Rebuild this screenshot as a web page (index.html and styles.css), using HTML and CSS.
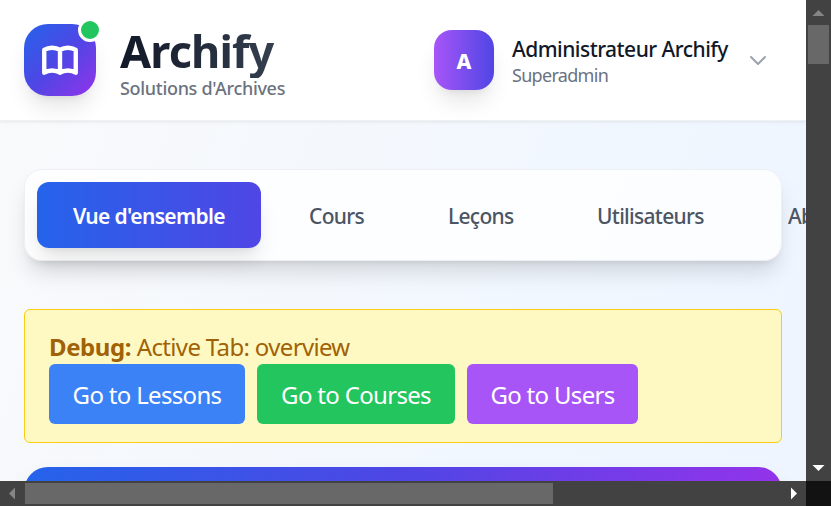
FILE: index.html
```html
<!DOCTYPE html>
<html lang="fr">
<head>
<meta charset="utf-8">
<title>Archify</title>
<link rel="stylesheet" href="styles.css">
</head>
<body>
<div class="window">
  <div class="viewport">
    <header class="header">
      <div class="brand">
        <div class="logo">
          <svg class="book" viewBox="0 0 24 24"><path d="M12 6.253v13m0-13C10.832 5.477 9.246 5 7.5 5S4.168 5.477 3 6.253v13C4.168 18.477 5.754 18 7.5 18s3.332.477 4.5 1.253m0-13C13.168 5.477 14.754 5 16.5 5c1.747 0 3.332.477 4.5 1.253v13C19.832 18.477 18.247 18 16.5 18c-1.746 0-3.332.477-4.5 1.253"/></svg>
          <span class="status"></span>
        </div>
        <div class="brand-text">
          <h1 class="brand-name">Archify</h1>
          <p class="tagline">Solutions d'Archives</p>
        </div>
      </div>
      <div class="user">
        <div class="avatar">A</div>
        <div class="user-text">
          <p class="user-name">Administrateur Archify</p>
          <p class="user-role">Superadmin</p>
        </div>
        <svg class="chevron" viewBox="0 0 24 24"><path d="M19 9l-7 7-7-7"/></svg>
      </div>
    </header>
    <main class="main">
      <nav class="tabs">
        <a class="tab tab-active">Vue d'ensemble</a>
        <a class="tab tab-courses">Cours</a>
        <a class="tab tab-lessons">Leçons</a>
        <a class="tab tab-users">Utilisateurs</a>
        <a class="tab tab-subs">Abonnements</a>
      </nav>
      <section class="debug">
        <p class="debug-line"><strong class="debug-key">Debug:</strong> <span>Active Tab: overview</span></p>
        <div class="debug-actions">
          <button class="btn btn-blue">Go to Lessons</button>
          <button class="btn btn-green">Go to Courses</button>
          <button class="btn btn-purple">Go to Users</button>
        </div>
      </section>
      <section class="hero"></section>
    </main>
  </div>
  <div class="scroll-y">
    <svg class="arrow" viewBox="0 0 25 25"><path class="arrow-off" d="M6.500 16h12L12.500 10z"/></svg>
    <div class="thumb-y"></div>
    <svg class="arrow arrow-down" viewBox="0 0 25 25"><path class="arrow-on" d="M6.500 9h12L12.500 15z"/></svg>
  </div>
  <div class="scroll-x">
    <svg class="arrow" viewBox="0 0 25 25"><path class="arrow-off" d="M15 6.500v12L9 12.500z"/></svg>
    <div class="thumb-x"></div>
    <svg class="arrow arrow-right" viewBox="0 0 25 25"><path class="arrow-on" d="M10 6.500v12L16 12.500z"/></svg>
  </div>
  <div class="corner"></div>
</div>
</body>
</html>
```
FILE: styles.css
```css
* { box-sizing: border-box; }
body, h1, p { margin: 0; }
body {
  overflow: hidden;
  font-family: "Noto Sans", "Open Sans", sans-serif;
  white-space: nowrap;
}
.window {
  display: grid;
  grid-template: 481px 25px / 806px 25px;
  width: 831px;
  height: 506px;
}
.viewport {
  overflow: hidden;
  background: linear-gradient(to bottom right, #f9fafb, #eff6ff 50%, #eef2ff) 0 0 / 806px 2200px no-repeat;
}
.header {
  display: flex;
  justify-content: space-between;
  height: 121px;
  padding: 24px 36px 0 24px;
  background: #fff;
  border-bottom: 1px solid #f0f1f3;
  box-shadow: 0 1px 3px rgba(0,0,0,.08);
}
.brand { display: flex; gap: 24px; }
.logo {
  position: relative;
  display: grid;
  place-items: center;
  width: 72px;
  height: 72px;
  border-radius: 24px;
  background: linear-gradient(to bottom right, #2563eb, #4f46e5 50%, #9333ea);
  box-shadow: 0 15px 22px -4px rgba(0,0,0,.1), 0 6px 9px -6px rgba(0,0,0,.1);
}
.book { width: 42px; height: 42px; fill: none; stroke: #fff; stroke-width: 2.5; stroke-linecap: round; stroke-linejoin: round; }
.status {
  position: absolute;
  top: -6px;
  right: -6px;
  width: 24px;
  height: 24px;
  border: 3px solid #fff;
  border-radius: 50%;
  background: #22c55e;
}
.brand-name {
  height: 54px;
  font-size: 45px;
  line-height: 54px;
  font-weight: 700;
  letter-spacing: -.85px;
  color: transparent;
  background: linear-gradient(to right, #111827, #374151);
  background-clip: text;
  -webkit-background-clip: text;
}
.tagline { font-size: 18px; line-height: 20px; font-weight: 500; letter-spacing: -.31px; color: #6b7280; }
.user { display: flex; align-items: flex-start; padding-top: 6px; }
.avatar {
  width: 60px;
  height: 60px;
  border-radius: 18px;
  background: linear-gradient(to right, #a855f7, #4f46e5);
  box-shadow: 0 15px 22px -4px rgba(0,0,0,.1), 0 6px 9px -6px rgba(0,0,0,.1);
  color: #fff;
  font-size: 21px;
  line-height: 62px;
  font-weight: 800;
  text-align: center;
}
.user-text { width: 216px; margin-left: 18px; padding-top: 6px; }
.user-name { font-size: 21px; line-height: 27px; font-weight: 500; letter-spacing: -.53px; color: #111827; }
.user-role { font-size: 18px; line-height: 25px; letter-spacing: -.7px; color: #6b7280; }
.chevron { width: 24px; height: 24px; margin: 18px 0 0 18px; fill: none; stroke: #9ca3af; stroke-width: 2; stroke-linecap: round; stroke-linejoin: round; }
.main { display: flex; flex-direction: column; padding: 48px 24px 0; }
.tabs {
  display: flex;
  gap: 12px;
  height: 92px;
  padding: 12px;
  border: 1px solid #eef0f4;
  border-radius: 18px;
  background: rgba(255,255,255,.8);
  box-shadow: 0 15px 22px -4px rgba(0,0,0,.13), 0 6px 9px -6px rgba(0,0,0,.13);
}
.tab {
  flex: none;
  height: 66px;
  padding: 0 36px;
  border-radius: 12px;
  font-size: 21px;
  line-height: 69px;
  font-weight: 500;
  letter-spacing: -.7px;
  color: #4b5563;
}
.tab-active {
  width: 224px;
  background: linear-gradient(to right, #2563eb, #4f46e5);
  box-shadow: 0 15px 22px -4px rgba(0,0,0,.1), 0 6px 9px -6px rgba(0,0,0,.1);
  color: #fff;
  font-weight: 600;
  letter-spacing: -.67px;
}
.tab-courses { width: 127px; }
.tab-lessons { width: 137px; }
.tab-users { width: 179px; }
.debug {
  height: 134px;
  margin-top: 48px;
  padding: 19px 24px 0;
  border: 1px solid #facc15;
  border-radius: 6px;
  background: #fef9c3;
  color: #a16207;
  font-size: 24px;
  letter-spacing: -.66px;
}
.debug-key { letter-spacing: -.4px; }
.debug-line { height: 35px; line-height: 36px; }
.debug-actions { display: flex; gap: 12px; }
.btn {
  height: 60px;
  padding: 1px 0 0;
  border: 0;
  border-radius: 6px;
  font: inherit;
  letter-spacing: -.68px;
  color: #fff;
}
.btn-blue { width: 196px; background: #3b82f6; }
.btn-green { width: 198px; background: #22c55e; }
.btn-purple { width: 171px; background: #a855f7; }
.hero {
  height: 200px;
  margin-top: 24px;
  border-radius: 24px;
  background: linear-gradient(to right, #2563eb, #4f46e5 50%, #9333ea);
  box-shadow: 0 20px 36px -6px rgba(0,0,0,.16);
}
.scroll-y, .scroll-x { display: flex; background: #424242; }
.scroll-y { flex-direction: column; }
.arrow { flex: none; width: 25px; height: 25px; }
.arrow-off { fill: #858585; }
.arrow-on { fill: #fff; }
.thumb-y { width: 21px; height: 39px; margin-left: 2px; background: #686868; }
.arrow-down { margin-top: auto; }
.thumb-x { width: 528px; height: 21px; margin-top: 2px; background: #686868; }
.arrow-right { margin-left: auto; }
.corner { background: #121212; }
```
